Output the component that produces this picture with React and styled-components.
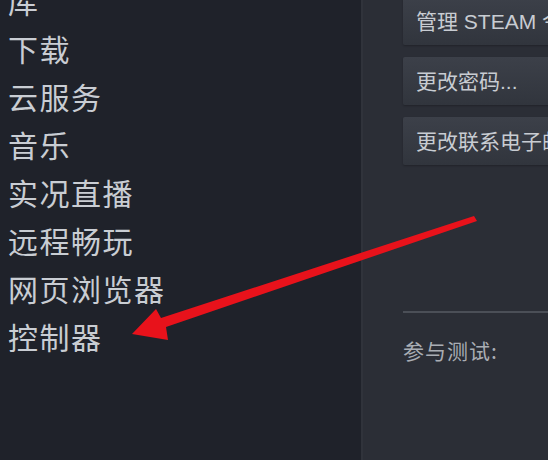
import React from 'react';
import styled, { createGlobalStyle } from 'styled-components';

const GlobalStyle = createGlobalStyle`
  html, body {
    margin: 0;
    padding: 0;
    background: #1f222a;
    overflow: hidden;
  }
  body {
    font-family: "Noto Sans CJK SC", "Noto Sans", sans-serif;
  }
`;

const menuItems = ['库', '下载', '云服务', '音乐', '实况直播', '远程畅玩', '网页浏览器', '控制器'];
const accountButtons = ['管理 STEAM 令牌...', '更改密码...', '更改联系电子邮件地址...'];

export default function App() {
  return (
    <>
      <GlobalStyle />
      <Window>
        <Sidebar>
          <MenuList>
            {menuItems.map((item) => (
              <MenuItem key={item}>{item}</MenuItem>
            ))}
          </MenuList>
        </Sidebar>
        <Content>
          <ButtonStack>
            {accountButtons.map((label) => (
              <ActionButton key={label}>{label}</ActionButton>
            ))}
          </ButtonStack>
          <Divider />
          <FieldLabel>参与测试:</FieldLabel>
        </Content>
        <Arrow viewBox="0 0 548 460" width="548" height="460">
          <polygon
            points="132,334 156,309 161,318 474,216 477,221 166,327 168,340"
            fill="#e8121b"
          />
        </Arrow>
      </Window>
    </>
  );
}

const Window = styled.div`
  position: relative;
  display: flex;
  width: 548px;
  height: 460px;
  overflow: hidden;
`;

const Sidebar = styled.nav`
  width: 361px;
  flex-shrink: 0;
  background: #1f222a;
  border-right: 2px solid #30333b;
`;

const MenuList = styled.ul`
  list-style: none;
  margin: -24px 0 0;
  padding: 0 0 0 8px;
`;

const MenuItem = styled.li`
  height: 48px;
  line-height: 48px;
  font-size: 30px;
  letter-spacing: 1.5px;
  color: #c9cdd3;
  white-space: nowrap;
`;

const Content = styled.main`
  flex: 1;
  display: flex;
  flex-direction: column;
  padding-left: 40px;
  background: #2b2e36;
  min-width: 0;
`;

const ButtonStack = styled.div`
  display: flex;
  flex-direction: column;
  gap: 12px;
  margin-top: -3px;
`;

const ActionButton = styled.button`
  width: 320px;
  height: 48px;
  padding: 0 0 2px 13px;
  border: none;
  border-radius: 2px;
  background: linear-gradient(180deg, #3c4049 0%, #31353d 100%);
  color: #c8ccd2;
  font-family: "Liberation Sans", "Noto Sans CJK SC", sans-serif;
  font-size: 21px;
  text-align: left;
  white-space: nowrap;
  box-shadow: 0 1px 2px rgba(0, 0, 0, 0.25);
`;

const Divider = styled.hr`
  width: 320px;
  height: 2px;
  margin: 146px 0 0;
  border: none;
  background: #4b4f57;
`;

const FieldLabel = styled.div`
  margin-top: 22px;
  font-size: 21px;
  letter-spacing: 1px;
  color: #a9adb4;
  white-space: nowrap;
`;

const Arrow = styled.svg`
  position: absolute;
  top: 0;
  left: 0;
  pointer-events: none;
`;
